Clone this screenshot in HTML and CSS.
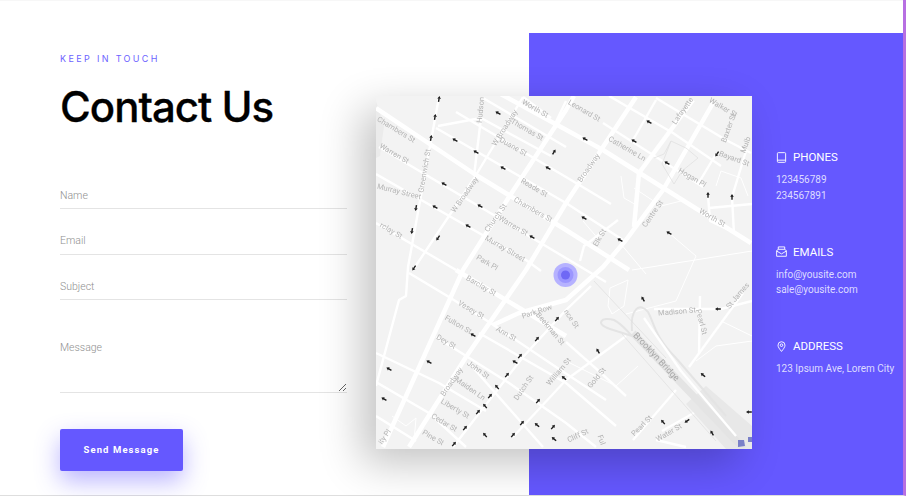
FILE: index.html
```html
<!DOCTYPE html>
<html lang="en">
<head>
    <meta charset="UTF-8">
    <title>Contact Us</title>
    <link rel="stylesheet" href="styles.css">
</head>
<body>
<div class="page">
    <section class="form-col">
        <p class="eyebrow">KEEP IN TOUCH</p>
        <h1>Contact Us</h1>
        <form class="form">
            <input class="field" type="text" placeholder="Name">
            <input class="field" type="text" placeholder="Email">
            <input class="field" type="text" placeholder="Subject">
            <textarea class="field message" placeholder="Message"></textarea>
            <button class="send" type="button">Send Message</button>
        </form>
    </section>
    <section class="stage">
        <div class="panel"></div>
        <div class="map">
            <svg viewBox="0 0 376 353" width="376" height="353">
                <defs>
                    <path id="a" d="M-3 0L-.2-1.8V1.8ZM-.2-.7H2.8V.7H-.2Z"/>
                </defs>
                <rect class="land" width="376" height="353"/>
                <path class="park" d="M0 5L8 30 4 60 0 62Z"/>
                <!-- big roads -->
                <g class="road r4">
                    <path d="M0 12L100 79 190 134 253 174"/>
                    <path d="M110-10L227 54 375 147"/>
                    <path d="M33 351L90 261 150 174 190 107 260 1"/>
                    <path d="M7 351L87 174 133 101 190 14 198 0"/>
                    <path d="M337 7L287 94 250 144 227 171 190 204 143 217 117 229"/>
                    <path d="M317 4L263 77 258 131"/>
                    <path d="M80 174L140 210 190 240"/>
                </g>
                <!-- smaller streets -->
                <g class="road r2">
                    <path d="M3 51L163 146 230 186"/>
                    <path d="M0 78L40 101 150 164 165 175"/>
                    <path d="M0 127L80 174"/>
                    <path d="M60 32L190 107 247 144"/>
                    <path d="M80 16L190 81 235 108"/>
                    <path d="M107 2L190 51"/>
                    <path d="M33 177L73 201 113 226 180 271 230 304"/>
                    <path d="M233 0L297 37 345 70"/>
                    <path d="M280 2L350 44 375 57"/>
                    <path d="M227 27L327 91"/>
                    <path d="M37 174L97 84 147 1"/>
                    <path d="M63 1L32 171 30 200 23 204 0 290"/>
                    <path d="M280 4L257 44"/>
                    <path d="M190 5L178 30"/>
                    <path d="M77 351L147 261 190 214 215 190"/>
                    <path d="M137 341L190 284 250 240"/>
                    <path d="M60 241L133 287 190 327 220 351"/>
                    <path d="M103 237L190 287 240 330"/>
                    <path d="M93 267L167 351"/>
                    <path d="M0 257L63 287 110 315"/>
                    <path d="M0 286L53 317 90 351"/>
                    <path d="M0 320L40 345"/>
                    <path d="M313 271L367 197"/>
                    <path d="M257 344L300 294"/>
                    <path d="M190 246L225 277 250 300"/>
                    <path d="M278 213L345 213 376 205"/>
                    <path d="M324 200L323 258"/>
                    <path d="M332 99L334 125 355 135"/>
                    <path d="M356 101L358 138"/>
                    <path d="M370 55L356 101"/>
                    <path d="M340 58L322 88"/>
                    <path d="M333 112L376 108"/>
                    <path d="M286 335L330 310"/>
                    <path d="M280 344L310 351"/>
                    <path d="M62 30L105 22 175 60"/>
                    <path d="M105 22L98 80"/>
                    <path d="M147 1L175 22"/>
                    <path d="M242 124L208 150 204 165"/>
                </g>
                <g class="road r1">
                    <path d="M244 147L270 178"/>
                    <path d="M293 137L320 160 300 205 250 218"/>
                    <path d="M256 174L376 155"/>
                    <path d="M258 92L285 110 305 105"/>
                    <path d="M245 80L248 102 262 110"/>
                    <path d="M340 90L345 75 365 82 372 100"/>
                    <path d="M190 265L240 290 262 270"/>
                    <path d="M376 245L340 250 320 265"/>
                    <path d="M345 225L376 240"/>
                    <path d="M16 320L30 330 40 322 38 345"/>
                    <path d="M207 125L224 145"/>
                    <path d="M232 210L234 192 252 184 248 210 236 218Z"/>
                </g>
                <!-- square near hogan, outline only -->
                <path class="line" d="M295 45L288 58 278 62M295 45L310 52 322 62 306 75 298 88 286 68Z"/>
                <!-- bridge -->
                <path class="deck" d="M330 290L376 330V353H350L310 308Z"/>
                <path class="ramp" d="M257 237L368 353"/>
                <path class="ramp thin" d="M256 235C254 212 264 206 272 216 278 226 278 240 300 262L350 320"/>
                <path class="ramp thin" d="M256 240L234 233C218 228 226 220 238 224 246 228 250 234 256 240"/>
                <path class="line" d="M218 185L290 262M246 238L340 345"/>
                <path class="road r2" d="M268 222L305 275 360 340"/>
                <path class="water" d="M362 344L368 344 369 350 362 351ZM372 341H376V346H372Z"/>
                <!-- pin -->
                <circle class="pin1" cx="189.500" cy="179" r="12"/>
                <circle class="pin2" cx="189.500" cy="179" r="8"/>
                <circle class="pin3" cx="189.500" cy="179" r="4.500"/>
                <!-- street names -->
                <g class="lbl">
                    <text transform="translate(20 34) rotate(31)">Chambers St</text>
                    <text transform="translate(18 58) rotate(30)">Warren St</text>
                    <text transform="translate(23 96) rotate(14)">Murray Street</text>
                    <text transform="translate(15 135) rotate(30)">rclay St</text>
                    <text transform="translate(49 75) rotate(-80)">Greenwich St</text>
                    <text transform="translate(129 32) rotate(-58)">W Broadway</text>
                    <text transform="translate(89 99) rotate(-55)">W Broadway</text>
                    <text transform="translate(105 14) rotate(-85)">Hudson</text>
                    <text transform="translate(159 13) rotate(30)">Worth St</text>
                    <text transform="translate(151 34) rotate(30)">Thomas St</text>
                    <text transform="translate(137 51) rotate(30)">Duane St</text>
                    <text transform="translate(158 92) rotate(30)">Reade St</text>
                    <text transform="translate(157 114) rotate(30)">Chambers St</text>
                    <text transform="translate(120 122) rotate(-55)">Church St</text>
                    <text transform="translate(137 130) rotate(30)">Warren St</text>
                    <text transform="translate(129 153) rotate(30)">Murray Street</text>
                    <text transform="translate(111 167) rotate(30)">Park Pl</text>
                    <text transform="translate(208 15) rotate(30)">Leonard St</text>
                    <text transform="translate(213 72) rotate(-55)">Broadway</text>
                    <text transform="translate(251 53) rotate(30)">Catherine Ln</text>
                    <text transform="translate(307 15) rotate(-55)">Lafayette</text>
                    <text transform="translate(347 12) rotate(30)">Walker St</text>
                    <text transform="translate(353 32) rotate(-70)">Baxter St</text>
                    <text transform="translate(358 63) rotate(20)">Bayard St</text>
                    <text transform="translate(370 49) rotate(-70)">Mulb</text>
                    <text transform="translate(316 82) rotate(30)">Hogan Pl</text>
                    <text transform="translate(336 122) rotate(30)">Worth St</text>
                    <text transform="translate(277 118) rotate(-55)">Centre St</text>
                    <text transform="translate(224 142) rotate(-60)">Elk St</text>
                    <text transform="translate(105 190) rotate(30)">Barclay St</text>
                    <text transform="translate(95 214) rotate(30)">Vesey St</text>
                    <text transform="translate(161 216) rotate(-18)">Park Row</text>
                    <text transform="translate(82 229) rotate(30)">Fulton St</text>
                    <text transform="translate(130 238) rotate(30)">Ann St</text>
                    <text transform="translate(174 233) rotate(50)">Beekman St</text>
                    <text transform="translate(70 246) rotate(30)">Dey St</text>
                    <text transform="translate(102 274) rotate(35)">John St</text>
                    <text transform="translate(76 286) rotate(-55)">Broadway</text>
                    <text transform="translate(94 293) rotate(35)">Maiden Ln</text>
                    <text transform="translate(148 292) rotate(-55)">Dutch St</text>
                    <text transform="translate(79 313) rotate(30)">Liberty St</text>
                    <text transform="translate(68 327) rotate(30)">Cedar St</text>
                    <text transform="translate(57 342) rotate(30)">Pine St</text>
                    <text transform="translate(183 276) rotate(-50)">William St</text>
                    <text transform="translate(9 341) rotate(-55)">ity Pl</text>
                    <text transform="translate(301 216) rotate(-5)">Madison St</text>
                    <text transform="translate(325 226) rotate(75)">Pearl St</text>
                    <text transform="translate(362 200) rotate(-50)">St James</text>
                    <text class="big" transform="translate(280 261) rotate(47)">Brooklyn Bridge</text>
                    <text transform="translate(221 282) rotate(-50)">Gold St</text>
                    <text transform="translate(266 330) rotate(-45)">Pearl St</text>
                    <text transform="translate(202 340) rotate(-25)">Cliff St</text>
                    <text transform="translate(293 337) rotate(-30)">Water St</text>
                    <text transform="translate(225 344) rotate(70)">Ful</text>
                    <text transform="translate(195 223) rotate(55)">nce St</text>
                </g>
                <!-- one way arrows -->
                <g class="arrows">
                    <use href="#a" transform="translate(63 3) rotate(100)"/>
                    <use href="#a" transform="translate(59 21) rotate(100)"/>
                    <use href="#a" transform="translate(55 42) rotate(100)"/>
                    <use href="#a" transform="translate(79 44) rotate(30)"/>
                    <use href="#a" transform="translate(100 56) rotate(30)"/>
                    <use href="#a" transform="translate(122 17) rotate(30)"/>
                    <use href="#a" transform="translate(127 72) rotate(30)"/>
                    <use href="#a" transform="translate(172 72) rotate(30)"/>
                    <use href="#a" transform="translate(178 56) rotate(120)"/>
                    <use href="#a" transform="translate(68 88) rotate(30)"/>
                    <use href="#a" transform="translate(40 112) rotate(-80)"/>
                    <use href="#a" transform="translate(59 111) rotate(30)"/>
                    <use href="#a" transform="translate(104 110) rotate(30)"/>
                    <use href="#a" transform="translate(92 130) rotate(30)"/>
                    <use href="#a" transform="translate(156 141) rotate(30)"/>
                    <use href="#a" transform="translate(36 135) rotate(-80)"/>
                    <use href="#a" transform="translate(62 142) rotate(-55)"/>
                    <use href="#a" transform="translate(38 172) rotate(-55)"/>
                    <use href="#a" transform="translate(273 26) rotate(30)"/>
                    <use href="#a" transform="translate(258 45) rotate(30)"/>
                    <use href="#a" transform="translate(209 43) rotate(30)"/>
                    <use href="#a" transform="translate(291 67) rotate(30)"/>
                    <use href="#a" transform="translate(341 58) rotate(-55)"/>
                    <use href="#a" transform="translate(332 99) rotate(90)"/>
                    <use href="#a" transform="translate(356 101) rotate(90)"/>
                    <use href="#a" transform="translate(208 122) rotate(30)"/>
                    <use href="#a" transform="translate(244 144) rotate(30)"/>
                    <use href="#a" transform="translate(293 137) rotate(30)"/>
                    <use href="#a" transform="translate(97 239) rotate(30)"/>
                    <use href="#a" transform="translate(181 223) rotate(130)"/>
                    <use href="#a" transform="translate(161 243) rotate(130)"/>
                    <use href="#a" transform="translate(144 260) rotate(130)"/>
                    <use href="#a" transform="translate(139 266) rotate(30)"/>
                    <use href="#a" transform="translate(131 279) rotate(130)"/>
                    <use href="#a" transform="translate(121 291) rotate(50)"/>
                    <use href="#a" transform="translate(114 300) rotate(130)"/>
                    <use href="#a" transform="translate(109 310) rotate(50)"/>
                    <use href="#a" transform="translate(102 316) rotate(130)"/>
                    <use href="#a" transform="translate(89 332) rotate(130)"/>
                    <use href="#a" transform="translate(78 348) rotate(130)"/>
                    <use href="#a" transform="translate(53 266) rotate(30)"/>
                    <use href="#a" transform="translate(13 273) rotate(30)"/>
                    <use href="#a" transform="translate(8 303) rotate(30)"/>
                    <use href="#a" transform="translate(109 339) rotate(50)"/>
                    <use href="#a" transform="translate(137 339) rotate(130)"/>
                    <use href="#a" transform="translate(146 327) rotate(130)"/>
                    <use href="#a" transform="translate(161 329) rotate(40)"/>
                    <use href="#a" transform="translate(162 305) rotate(130)"/>
                    <use href="#a" transform="translate(177 331) rotate(130)"/>
                    <use href="#a" transform="translate(178 343) rotate(40)"/>
                    <use href="#a" transform="translate(188 282) rotate(40)"/>
                    <use href="#a" transform="translate(267 203) rotate(60)"/>
                    <use href="#a" transform="translate(342 213) rotate(0)"/>
                    <use href="#a" transform="translate(222 255) rotate(60)"/>
                    <use href="#a" transform="translate(327 279) rotate(40)"/>
                    <use href="#a" transform="translate(287 326) rotate(50)"/>
                    <use href="#a" transform="translate(311 325) rotate(-35)"/>
                    <use href="#a" transform="translate(336 337) rotate(60)"/>
                    <use href="#a" transform="translate(373 316) rotate(0)"/>
                </g>
            </svg>
        </div>
        <div class="info">
            <div class="block phones">
                <h3>
                    <svg class="ico" viewBox="0 0 12 12"><rect x="1.5" y=".7" width="9" height="10.6" rx="1"/><path d="M1.5 8.9H10.5"/></svg>
                    PHONES
                </h3>
                <p>123456789</p>
                <p>234567891</p>
            </div>
            <div class="block emails">
                <h3>
                    <svg class="ico" viewBox="0 0 12 12"><path d="M.7 5V11.2H11.3V5L9.5 3.8V1H2.5V3.8Z"/><path d="M.7 5.5L6 8.6 11.3 5.5M2.5 3.6H9.5"/></svg>
                    EMAILS
                </h3>
                <p>info@yousite.com</p>
                <p>sale@yousite.com</p>
            </div>
            <div class="block address">
                <h3>
                    <svg class="ico" viewBox="0 0 12 12"><path d="M6 11.4C4 8.8 2.2 6.8 2.2 4.6A3.8 3.8 0 0 1 9.8 4.6C9.8 6.8 8 8.8 6 11.4Z"/><circle cx="6" cy="4.6" r="1.4"/></svg>
                    ADDRESS
                </h3>
                <p>123 Ipsum Ave, Lorem City</p>
            </div>
        </div>
    </section>
</div>
</body>
</html>
```
FILE: styles.css
```css
* {margin: 0; padding: 0; box-sizing: border-box;}
html, body {height: 100%; background: #fff; overflow: hidden;}
body {font-family: Roboto, "Liberation Sans", sans-serif;}

.page {
    display: flex;
    width: 906px;
    height: 496px;
    border-bottom: 1px solid #dedede;
    border-right: 3px solid #b76fe2;
    box-shadow: inset 0 1px #f7f7f7;
}

/* left side */
.form-col {
    width: 376px;
    flex: none;
    padding: 53px 29px 0 60px;
}
.eyebrow {
    font: 400 9px/11px Inter, sans-serif;
    letter-spacing: 2.35px;
    color: #6c63ff;
}
h1 {
    font: 500 42px/50px Inter, sans-serif;
    letter-spacing: -1px;
    -webkit-text-stroke: .3px #000;
    color: #000;
    margin-top: 18px;
}
.form {
    display: flex;
    flex-direction: column;
    margin-top: 48px;
}
.field {
    display: block;
    width: 100%;
    height: 29px;
    border: 0;
    border-bottom: 1px solid #e4e4e4;
    outline: 0;
    background: transparent;
    padding-top: 2px;
    font: 300 10.5px/14px Roboto, sans-serif;
    color: #555;
    margin-bottom: 16.5px;
}
.field::placeholder {color: #8f8f8f; opacity: 1;}
.message {
    height: 54px;
    margin-top: 22px;
    margin-bottom: 36px;
}
.send {
    width: 123px;
    height: 42px;
    border: 0;
    border-radius: 2px;
    background: #6558ff;
    color: #fff;
    font: 700 9.5px/42px Roboto, sans-serif;
    letter-spacing: 1.1px;
    box-shadow: 0 10px 24px rgba(101, 88, 255, .45);
}

/* map + purple panel sit in the same grid row */
.stage {
    flex: 1;
    display: grid;
    grid-template-columns: 153px 223px 151px;
    grid-template-rows: 1fr;
}
.panel {
    grid-column: 2 / 4;
    grid-row: 1;
    margin-top: 33px;
    background: #6558ff;
}
.map {
    grid-column: 1 / 3;
    grid-row: 1;
    margin-top: 96px;
    height: 353px;
    background: #f2f2f2;
    box-shadow: -14px 14px 40px rgba(0, 0, 0, .24);
    z-index: 1;
    overflow: hidden;
}
.map svg {display: block; filter: blur(.35px);}
.land {fill: #f3f3f3;}
.park {fill: #ebebeb;}
.road {fill: none; stroke: #fff; stroke-linejoin: round;}
.r4 {stroke-width: 4.5;}
.r2 {stroke-width: 2.4;}
.r1 {stroke-width: 1;}
.line {fill: none; stroke: #dedede; stroke-width: .7;}
.deck {fill: #e8e8e8;}
.ramp {fill: none; stroke: #e4e4e4; stroke-width: 7;}
.ramp.thin {stroke-width: 2;}
.water {fill: #7a80c8;}
.pin1 {fill: #b6b2ff;}
.pin2 {fill: #9b96ff;}
.pin3 {fill: #6f68f5;}
.lbl text {
    font: 400 7.5px Roboto, sans-serif;
    fill: #b4b4b4;
    text-anchor: middle;
    dominant-baseline: middle;
}
.lbl .big {font-size: 9px; fill: #a8a8a8;}
.arrows {fill: #1c1c1c;}

/* contact details */
.info {
    grid-column: 3;
    grid-row: 1;
    z-index: 2;
    padding: 149px 0 0 24px;
    color: #fff;
}
.block {height: 94.5px;}
.block h3 {
    display: flex;
    align-items: center;
    gap: 6px;
    font: 400 11.5px/16px Roboto, sans-serif;
    margin-bottom: 7px;
}
.block p {
    font: 400 10px/15.5px Roboto, sans-serif;
    color: #dedcff;
    white-space: nowrap;
}
.ico {
    width: 11px;
    height: 11px;
    fill: none;
    stroke: #fff;
    stroke-width: 1;
    flex: none;
}
```
